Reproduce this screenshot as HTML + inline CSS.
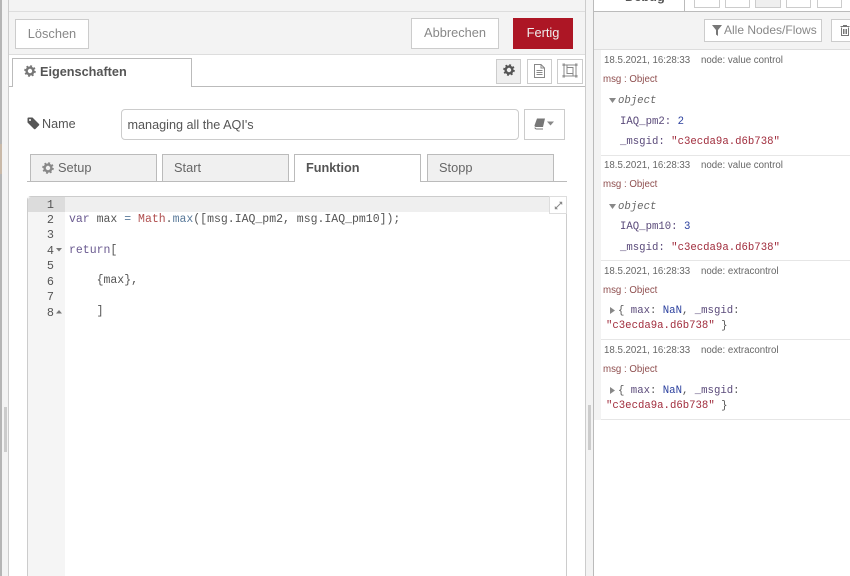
<!DOCTYPE html>
<html><head><meta charset="utf-8">
<style>
html,body{margin:0;padding:0;background:#fff}
#r{position:relative;width:850px;height:576px;overflow:hidden;background:#fff;font-family:"Liberation Sans",sans-serif;color:#555}
.a{position:absolute;box-sizing:border-box}
.t{position:absolute;white-space:nowrap}
.btn{position:absolute;box-sizing:border-box;background:#fff;border:1px solid #ccc;text-align:center;font-size:12.8px;color:#888}
.tab{position:absolute;box-sizing:border-box;top:154px;height:28px;background:#f0f0f0;border:1px solid #bbb;border-bottom:1px solid #bbb;font-size:13.6px;line-height:26px;color:#666}
.code{position:absolute;white-space:pre;font-family:"Liberation Mono",monospace;font-size:11.5px;line-height:15px;color:#555}
.ln{position:absolute;width:26px;text-align:right;left:28px;font-family:"Liberation Mono",monospace;font-size:11.8px;line-height:15px;color:#555}
.m{position:absolute;white-space:pre;font-family:"Liberation Mono",monospace;font-size:10.67px;line-height:15px;color:#5a4a7a}
.d{position:absolute;white-space:nowrap;font-size:9.7px;line-height:12px;color:#666}
.o{position:absolute;white-space:nowrap;font-size:9.7px;line-height:12px;color:#8f4f4f}
.sep{position:absolute;left:601px;right:0;height:1px;background:#e6e6e6}
</style></head><body>
<div id="r">
<!-- left strip -->
<div class="a" style="left:0;top:0;width:2px;height:576px;background:#b5b5b5"></div>
<div class="a" style="left:0;top:144px;width:2px;height:30px;background:#c9b9a8"></div>
<div class="a" style="left:2px;top:0;width:6px;height:576px;background:#f3f3f3"></div>
<div class="a" style="left:4px;top:407px;width:3px;height:45px;background:#ccc"></div>
<div class="a" style="left:8px;top:0;width:1px;height:576px;background:#ccc"></div>
<!-- main header -->
<div class="a" style="left:9px;top:0;width:576px;height:54px;background:#f3f3f3"></div>
<div class="a" style="left:9px;top:11px;width:576px;height:1px;background:#ddd"></div>
<div class="a" style="left:9px;top:54px;width:576px;height:1px;background:#ddd"></div>
<div class="btn" style="left:15px;top:19px;width:74px;height:30px;line-height:27px">Löschen</div>
<div class="btn" style="left:411px;top:18px;width:88px;height:31px;line-height:27px">Abbrechen</div>
<div class="btn" style="left:513px;top:18px;width:60px;height:31px;line-height:27px;background:#ad1625;border-color:#ad1625;color:#eee">Fertig</div>
<!-- properties tabs -->
<div class="a" style="left:9px;top:86px;width:576px;height:1px;background:#bbb"></div>
<div class="a" style="left:12px;top:58px;width:180px;height:29px;background:#fff;border:1px solid #bbb;border-bottom:none"></div>
<svg class="a" style="left:24px;top:65px" width="12" height="12" viewBox="0 0 12 12"><circle cx="6" cy="6" r="3.4" fill="none" stroke="#777" stroke-width="2.4"/><circle cx="6" cy="6" r="4.9" fill="none" stroke="#777" stroke-width="1.8" stroke-dasharray="1.9 1.95"/></svg>
<div class="t" style="left:40px;top:65px;font-size:12.7px;line-height:15px;font-weight:bold;color:#555">Eigenschaften</div>
<div class="a" style="left:496px;top:59px;width:25px;height:25px;background:#efefef;border:1px solid #ccc"></div>
<svg class="a" style="left:503px;top:64px" width="12" height="12" viewBox="0 0 12 12"><circle cx="6" cy="6" r="3.4" fill="none" stroke="#555" stroke-width="2.4"/><circle cx="6" cy="6" r="4.9" fill="none" stroke="#555" stroke-width="1.8" stroke-dasharray="1.9 1.95"/></svg>
<div class="a" style="left:527px;top:59px;width:25px;height:25px;background:#fff;border:1px solid #ccc"></div>
<svg class="a" style="left:533px;top:64px" width="13" height="14" viewBox="0 0 13 14"><path d="M1.5 .5H8L11.5 4V13.5H1.5ZM8 .5V4H11.5M3.5 6.5H9.5M3.5 8.5H9.5M3.5 10.5H9.5" fill="none" stroke="#888" stroke-width="1"/></svg>
<div class="a" style="left:557px;top:59px;width:26px;height:25px;background:#fff;border:1px solid #ccc"></div>
<svg class="a" style="left:562px;top:63px" width="16" height="15" viewBox="0 0 16 15"><path d="M2 2H14V13H2ZM5 4.5H11V10.5H5Z" fill="none" stroke="#888" stroke-width="1"/><path d="M5 2V4.5M11 10.5V13" stroke="#888"/><rect x="0.5" y="0.5" width="2.5" height="2.5" fill="#999"/><rect x="13" y="0.5" width="2.5" height="2.5" fill="#999"/><rect x="0.5" y="12" width="2.5" height="2.5" fill="#999"/><rect x="13" y="12" width="2.5" height="2.5" fill="#999"/></svg>
<!-- name row -->
<svg class="a" style="left:27px;top:117px" width="13" height="13" viewBox="0 0 13 13"><path d="M.5 1.5 Q.5 .5 1.5 .5H5.5L12 7Q12.6 7.7 12 8.4L8.4 12Q7.7 12.6 7 12L.5 5.5Z" fill="#555"/><circle cx="3" cy="3" r="1" fill="#fff"/></svg>
<div class="t" style="left:42px;top:117px;font-size:12.6px;line-height:15px;color:#555">Name</div>
<div class="a" style="left:121px;top:109px;width:398px;height:31px;background:#fff;border:1px solid #ccc;border-radius:4px"></div>
<div class="t" style="left:127.5px;top:118px;font-size:12.65px;line-height:15px;color:#555">managing all the AQI's</div>
<div class="a" style="left:524px;top:109px;width:41px;height:31px;background:#fff;border:1px solid #ccc"></div>
<svg class="a" style="left:534px;top:118px" width="20" height="12" viewBox="0 0 20 12"><path d="M3 .5H11L9 9H2Q.5 9 .5 7.5Z" fill="#777"/><path d="M1 9.5Q1 11 3 11H9" fill="none" stroke="#777"/><path d="M13 3.5H20L16.5 7.5Z" fill="#888"/></svg>
<!-- sub tabs -->
<div class="a" style="left:27px;top:181px;width:540px;height:1px;background:#bbb"></div>
<div class="tab" style="left:30px;width:127px"></div>
<svg class="a" style="left:42px;top:162px" width="12" height="12" viewBox="0 0 12 12"><circle cx="6" cy="6" r="3.4" fill="none" stroke="#888" stroke-width="2.4"/><circle cx="6" cy="6" r="4.9" fill="none" stroke="#888" stroke-width="1.8" stroke-dasharray="1.9 1.95"/></svg>
<div class="t" style="left:58px;top:160px;font-size:12.8px;line-height:15px;color:#666">Setup</div>
<div class="tab" style="left:162px;width:127px"></div>
<div class="t" style="left:174px;top:160px;font-size:12.8px;line-height:15px;color:#666">Start</div>
<div class="tab" style="left:294px;width:127px;background:#fff;border-bottom:none"></div>
<div class="t" style="left:306px;top:161px;font-size:12.7px;line-height:15px;font-weight:bold;color:#555">Funktion</div>
<div class="tab" style="left:427px;width:127px"></div>
<div class="t" style="left:439px;top:160px;font-size:12.8px;line-height:15px;color:#666">Stopp</div>
<!-- editor -->
<div class="a" style="left:27px;top:196px;width:540px;height:390px;background:#fff;border:1px solid #ccc;border-radius:4px 4px 0 0"></div>
<div class="a" style="left:28px;top:197px;width:37px;height:379px;background:#f5f5f5"></div>
<div class="a" style="left:28px;top:197px;width:37px;height:15px;background:#dcdcdc;border-radius:3px 0 0 0"></div>
<div class="a" style="left:65px;top:197px;width:501px;height:15px;background:#efefef"></div>
<div class="a" style="left:549px;top:196px;width:18px;height:18px;background:#fff;border:1px solid #ddd"></div>
<svg class="a" style="left:554px;top:201px" width="9" height="9" viewBox="0 0 9 9"><path d="M1.5 7.5 7.5 1.5" stroke="#888" stroke-width="1"/><path d="M5 .8H8.2V4ZM.8 5V8.2H4Z" fill="#888"/></svg>
<div class="ln" style="top:198px">1</div>
<div class="ln" style="top:213px">2</div>
<div class="ln" style="top:228px">3</div>
<div class="ln" style="top:244px">4</div>
<div class="ln" style="top:259px">5</div>
<div class="ln" style="top:275px">6</div>
<div class="ln" style="top:290px">7</div>
<div class="ln" style="top:306px">8</div>
<svg class="a" style="left:56px;top:248px" width="6" height="4"><path d="M0 0H6L3 3.5Z" fill="#777"/></svg>
<svg class="a" style="left:56px;top:310px" width="6" height="4"><path d="M0 3.5H6L3 0Z" fill="#777"/></svg>
<div class="code" style="left:69px;top:212px"><span style="color:#6a5a90">var</span> max <span style="color:#5a7a9a">=</span> <span style="color:#b05050">Math</span>.<span style="color:#5a7a9a">max</span>([msg.IAQ_pm2, msg.IAQ_pm10]);</div>
<div class="code" style="left:69px;top:243px"><span style="color:#6a5a90">return</span>[</div>
<div class="code" style="left:69px;top:273px">    {max},</div>
<div class="code" style="left:69px;top:304px">    ]</div>
<!-- splitter -->
<div class="a" style="left:585px;top:0;width:1px;height:576px;background:#ccc"></div>
<div class="a" style="left:586px;top:0;width:7px;height:576px;background:#f3f3f3"></div>
<div class="a" style="left:588px;top:405px;width:3px;height:45px;background:#ccc"></div>
<div class="a" style="left:593px;top:0;width:1px;height:576px;background:#bbb"></div>
<!-- debug header -->
<div class="a" style="left:594px;top:11px;width:256px;height:1px;background:#bbb"></div>
<div class="a" style="left:594px;top:12px;width:256px;height:37px;background:#f3f3f3"></div>
<div class="a" style="left:594px;top:49px;width:256px;height:1px;background:#ddd"></div>
<div class="t" style="left:625px;top:-11px;font-size:12.8px;line-height:15px;font-weight:bold;color:#555">Debug</div>
<div class="a" style="left:684px;top:-5px;width:1px;height:16px;background:#bbb"></div>
<div class="a" style="left:694px;top:-5px;width:26px;height:13px;background:#fff;border:1px solid #ccc"></div>
<div class="a" style="left:725px;top:-5px;width:25px;height:13px;background:#fff;border:1px solid #ccc"></div>
<div class="a" style="left:755px;top:-5px;width:26px;height:13px;background:#efefef;border:1px solid #ccc"></div>
<div class="a" style="left:786px;top:-5px;width:25px;height:13px;background:#fff;border:1px solid #ccc"></div>
<div class="a" style="left:817px;top:-5px;width:25px;height:13px;background:#fff;border:1px solid #ccc"></div>
<div class="a" style="left:704px;top:19px;width:118px;height:23px;background:#fff;border:1px solid #ccc"></div>
<svg class="a" style="left:712px;top:25px" width="10" height="11" viewBox="0 0 10 11"><path d="M0 0H10L6 5V11L4 9.5V5Z" fill="#777"/></svg>
<div class="t" style="left:724px;top:23px;font-size:12px;line-height:15px;color:#888">Alle Nodes/Flows</div>
<div class="a" style="left:831px;top:19px;width:30px;height:23px;background:#fff;border:1px solid #ccc"></div>
<svg class="a" style="left:840px;top:25px" width="10" height="11" viewBox="0 0 10 11"><path d="M.5 1.5H9.5M3.5 1.5V.5H6.5V1.5M1.5 2.5V10.5H8.5V2.5M3.5 4V9M5 4V9M6.5 4V9" fill="none" stroke="#777"/></svg>
<!-- debug list -->
<div class="a" style="left:594px;top:50px;width:7px;height:370px;background:#f3f3f3"></div>
<div class="d" style="left:604px;top:55px">18.5.2021, 16:28:33</div><div class="d" style="left:701px;top:55px">node: value control</div>
<div class="o" style="left:603px;top:74px">msg : Object</div>
<svg class="a" style="left:609px;top:98px" width="7" height="5"><path d="M0 0H7L3.5 5Z" fill="#888"/></svg>
<div class="m" style="left:618px;top:94px;font-style:italic;color:#666">object</div>
<div class="m" style="left:620px;top:115px">IAQ_pm2: <span style="color:#2a3f9d">2</span></div>
<div class="m" style="left:620px;top:135px">_msgid: <span style="color:#a02c3c">"c3ecda9a.d6b738"</span></div>
<div class="sep" style="top:155px"></div>
<div class="d" style="left:604px;top:160px">18.5.2021, 16:28:33</div><div class="d" style="left:701px;top:160px">node: value control</div>
<div class="o" style="left:603px;top:179px">msg : Object</div>
<svg class="a" style="left:609px;top:204px" width="7" height="5"><path d="M0 0H7L3.5 5Z" fill="#888"/></svg>
<div class="m" style="left:618px;top:200px;font-style:italic;color:#666">object</div>
<div class="m" style="left:620px;top:220px">IAQ_pm10: <span style="color:#2a3f9d">3</span></div>
<div class="m" style="left:620px;top:241px">_msgid: <span style="color:#a02c3c">"c3ecda9a.d6b738"</span></div>
<div class="sep" style="top:260px"></div>
<div class="d" style="left:604px;top:266px">18.5.2021, 16:28:33</div><div class="d" style="left:701px;top:266px">node: extracontrol</div>
<div class="o" style="left:603px;top:285px">msg : Object</div>
<svg class="a" style="left:610px;top:307px" width="5" height="7"><path d="M0 0V7L5 3.5Z" fill="#888"/></svg>
<div class="m" style="left:618px;top:304px;color:#555">{ <span style="color:#5a4a7a">max</span>: <span style="color:#2a3f9d">NaN</span>, <span style="color:#5a4a7a">_msgid</span>:</div>
<div class="m" style="left:606px;top:319px;color:#555"><span style="color:#a02c3c">"c3ecda9a.d6b738"</span> }</div>
<div class="sep" style="top:339px"></div>
<div class="d" style="left:604px;top:345px">18.5.2021, 16:28:33</div><div class="d" style="left:701px;top:345px">node: extracontrol</div>
<div class="o" style="left:603px;top:364px">msg : Object</div>
<svg class="a" style="left:610px;top:387px" width="5" height="7"><path d="M0 0V7L5 3.5Z" fill="#888"/></svg>
<div class="m" style="left:618px;top:384px;color:#555">{ <span style="color:#5a4a7a">max</span>: <span style="color:#2a3f9d">NaN</span>, <span style="color:#5a4a7a">_msgid</span>:</div>
<div class="m" style="left:606px;top:399px;color:#555"><span style="color:#a02c3c">"c3ecda9a.d6b738"</span> }</div>
<div class="sep" style="top:419px"></div>
</div>
</body></html>
